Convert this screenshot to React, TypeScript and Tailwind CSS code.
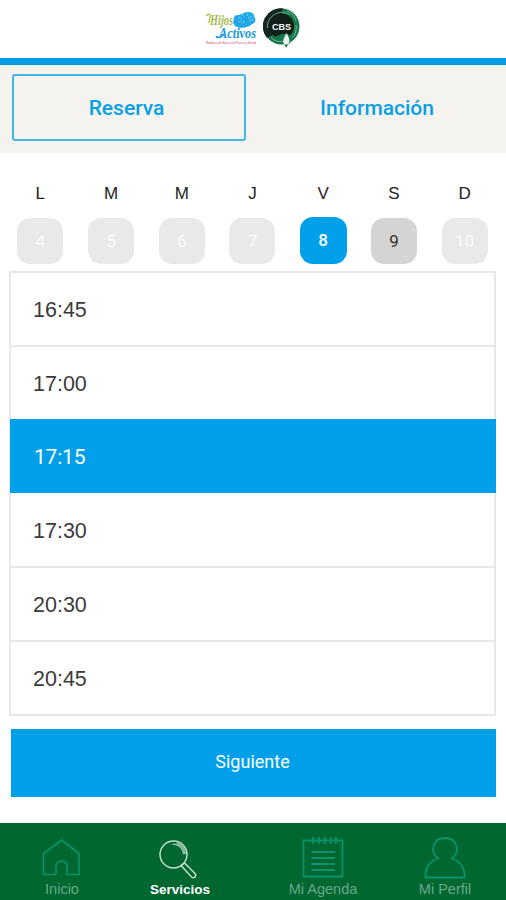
import {useState} from "react";

type Day = { letter: string; number: number; available: boolean };

const days: Day[] = [
    {letter: "L", number: 4, available: false},
    {letter: "M", number: 5, available: false},
    {letter: "M", number: 6, available: false},
    {letter: "J", number: 7, available: false},
    {letter: "V", number: 8, available: true},
    {letter: "S", number: 9, available: true},
    {letter: "D", number: 10, available: false},
];

const hours = ["16:45", "17:00", "17:15", "17:30", "20:30", "20:45"];

const ActivosLogo = () => (
    <svg width="52" height="38" viewBox="0 0 52 38" overflow="visible">
        <g fill="#1fa8e6">
            <ellipse cx="38" cy="12.500" rx="11" ry="7" transform="rotate(-14 38 12.500)" />
            <ellipse cx="32" cy="10" rx="4" ry="3" />
            <ellipse cx="42" cy="7.500" rx="6" ry="3.500" />
            <ellipse cx="45" cy="12" rx="4.500" ry="4" />
        </g>
        <path d="M32 9l4 2M36 6l2 3M42 5l-1 3M46 8l-4 2M48 12l-5 0M32 14l4-1M37 16l1-3" stroke="#a5dcf5" strokeWidth=".6" />
        <text x="4" y="17" textLength="23" lengthAdjust="spacingAndGlyphs" fontFamily="Liberation Serif, serif" fontStyle="italic" fontWeight="700" fontSize="14" fill="#9fba4c">Hijos</text>
        <path d="M0 8c3-3 5-2 4 1l-1 6" stroke="#a4bd45" strokeWidth="1.200" fill="none" />
        <text x="13" y="30" textLength="37" lengthAdjust="spacingAndGlyphs" fontFamily="Liberation Serif, serif" fontStyle="italic" fontWeight="700" fontSize="14" fill="#1699dc">Activos</text>
        <path d="M10 28c2 3 6 1 8-2" stroke="#1699dc" strokeWidth="1.500" fill="none" />
        <text x="0" y="35.500" textLength="50" lengthAdjust="spacingAndGlyphs" fontFamily="Liberation Sans, sans-serif" fontSize="4" fill="#dc4a5a">Hábitos de Ejercicio Físico y Salud</text>
    </svg>
);

const CbsLogo = () => (
    <svg width="38" height="42" viewBox="0 0 38 42">
        <circle cx="18.500" cy="18.500" r="18" fill="#17784e" />
        <path d="M20 .5A18 18 0 0 0 4 30L12 26A11 11 0 0 1 18 8Z" fill="#15251f" />
        <circle cx="18.500" cy="18" r="12.500" fill="#102019" />
        <path d="M4.500 20a14.500 14.500 0 0 1 22-13.500" fill="none" stroke="#7fa894" strokeWidth=".9" />
        <path d="M8 29c4 5 8 5 13 4M33 17c1 7-2 12-6 15M24 3c5 2 8 6 9 10" fill="none" stroke="#8fc4aa" strokeWidth=".8" />
        <path d="M12 29c4 2 6 3 8 4l3 7c2-4 5-6 8-9-4-5-8-6-12-5z" fill="#17784e" />
        <path d="M23.500 25c2 4 4 7 2.500 10-1 2-4.500 2-5.500 0-1-3 1-6 3-10z" fill="#edf3ef" />
        <text x="18.500" y="21.500" textAnchor="middle" textLength="19" lengthAdjust="spacingAndGlyphs" fontFamily="Liberation Sans, sans-serif" fontWeight="700" fontSize="9.500" fill="#fff">CBS</text>
    </svg>
);

const HomeIcon = () => (
    <svg width="42" height="44" viewBox="0 0 42 44" fill="none" stroke="#0c936c" strokeWidth="1.600" strokeLinejoin="round">
        <path d="M20.500 4L38 17.500V38.500H26V30Q25.500 25 20.500 25Q15.500 25 15 30V38.500H2.500V17.500Z" />
    </svg>
);

const SearchIcon = () => (
    <svg width="42" height="44" viewBox="0 0 42 44" fill="none" stroke="#c5dcc9" strokeWidth="1.500">
        <circle cx="14.500" cy="18.500" r="13.500" />
        <path d="M13.500 8Q23.500 8.500 25 18.500M17.500 7Q25.500 10 26.500 18" stroke="#8fbda0" strokeWidth="1.600" />
        <path d="M22 29.500L32.500 41Q34.500 42.500 36 41Q37.500 39.500 36 37.500L25.500 27Z" />
    </svg>
);

const AgendaIcon = () => (
    <svg width="42" height="44" viewBox="0 0 42 44" fill="none" stroke="#0c936c" strokeWidth="1.800">
        <path d="M1.500 4.500H40.500V40.500H1.500Z" />
        <path d="M11 1V8M17 1V8M23 1V8M29 1V8M34 1V8" />
        <path d="M9.500 16H33M9.500 22H33M9.500 28H33M9.500 34H33" strokeWidth="2" />
    </svg>
);

const ProfileIcon = () => (
    <svg width="42" height="44" viewBox="0 0 42 44" fill="none" stroke="#0c936c" strokeWidth="1.800" strokeLinejoin="round">
        <path d="M14.500 22.500C5 16 9 2 21 2S37 16 27.500 22.500C36 25 41 31 40.500 41.500H1.500C1 31 6 25 14.500 22.500Z" />
    </svg>
);

const navItems = [
    {label: "Inicio", icon: <HomeIcon />, width: "w-[124px]"},
    {label: "Servicios", icon: <SearchIcon />, width: "w-28"},
    {label: "Mi Agenda", icon: <AgendaIcon />, width: "w-[174px]"},
    {label: "Mi Perfil", icon: <ProfileIcon />, width: "w-[70px]"},
];

const getDayClass = (day: Day, selected: boolean) => {
    if (selected) return "h-[47px] w-[47px] bg-[#009fe9] text-white font-medium";
    if (day.available) return "h-[46px] w-[46px] bg-[#d4d5d3] pt-0.5 text-[#333]";
    return "h-[46px] w-[46px] bg-[#e9e9e9] pt-0.5 text-[#fafafa]";
}

const getHourClass = (hour: string, selectedHour: string) => {
    if (hour === selectedHour) return "-mr-0.5 -ml-px h-[74px] bg-[#009fe9] pl-6 pt-1 text-[21px] tracking-[-0.01em] text-white";
    const base = "pl-[22px] font-['Liberation_Sans',sans-serif] text-[21.500px] text-[#3b3b3b]";
    // the row above the selected one has no divider
    if (hours[hours.indexOf(hour) + 1] === selectedHour) return `h-[72px] pt-0.5 ${base}`;
    if (hours[hours.indexOf(hour) - 1] === selectedHour) return `h-[75px] border-b-2 border-[#e8e8e8] pt-1 ${base}`;
    return `h-[74px] border-b-2 border-[#e8e8e8] pt-0.5 ${base}`;
}

const App = () => {
    const [selectedDay, setSelectedDay] = useState<number>(8);
    const [selectedHour, setSelectedHour] = useState<string>("17:15");
    const [section, setSection] = useState<string>("Servicios");

    return <div className="flex h-[900px] w-[506px] flex-col bg-white font-[Roboto,sans-serif]">
        <header className="flex h-[65px] items-start justify-center gap-[5px] border-b-[7px] border-[#009be5] pt-2">
            <ActivosLogo />
            <CbsLogo />
        </header>
        <div className="flex h-[88px] bg-[#f4f3ef] pt-[9px] pl-3 text-[21px] font-medium text-[#099fe5]">
            <button className="h-[67px] w-[234px] shrink-0 rounded-[3px] border-2 border-[#45b5e6] pt-0.5 pr-[5px]">Reserva</button>
            <button className="h-[67px] flex-1 pt-0.5 pl-0.5">Información</button>
        </div>
        <div className="grid h-[118px] grid-cols-7 pt-[30px] pr-[6px] pl-[5px]">
            {days.map((day) => (
                <div key={day.number} className="flex flex-col items-center justify-between pb-[7px]">
                    <span className="font-['Liberation_Sans',sans-serif] text-[17px] leading-[22px] text-[#222]">{day.letter}</span>
                    <button
                        disabled={!day.available}
                        onClick={() => setSelectedDay(day.number)}
                        className={`flex items-center justify-center rounded-[13px] text-[17px] ${getDayClass(day, day.number === selectedDay)}`}
                    >
                        {day.number}
                    </button>
                </div>
            ))}
        </div>
        <ul className="mr-[10px] ml-[9px] flex h-[445px] flex-col border-x-2 border-t-2 border-[#e8e8e8]">
            {hours.map((hour) => (
                <li
                    key={hour}
                    onClick={() => setSelectedHour(hour)}
                    className={`flex shrink-0 items-center ${getHourClass(hour, selectedHour)}`}
                >
                    {hour}
                </li>
            ))}
        </ul>
        <button className="mt-[13px] mr-[10px] ml-[11px] h-[68px] bg-[#009fe9] pr-0.5 pb-1 text-[18px] text-white">Siguiente</button>
        <nav className="mt-auto flex h-[77px] bg-[#016730] pt-[13px]">
            {navItems.map((item) => (
                <button
                    key={item.label}
                    onClick={() => setSection(item.label)}
                    className={`flex flex-col items-center ${item.width}`}
                >
                    {item.icon}
                    <span className={`font-['Liberation_Sans',sans-serif] leading-[19px] whitespace-nowrap ${section === item.label ? "text-[13.500px] font-bold text-white" : "text-[14.500px] text-[#68a987]"}`}>
                        {item.label}
                    </span>
                </button>
            ))}
        </nav>
    </div>
}

export default App;
